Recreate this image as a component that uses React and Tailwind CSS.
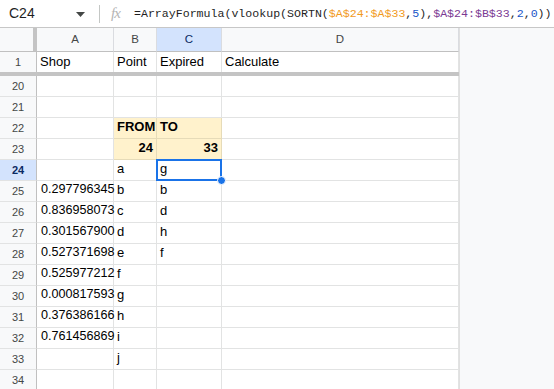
import React from "react";

const cols = [
  { key: "A", w: "w-[77px]" },
  { key: "B", w: "w-[43px]" },
  { key: "C", w: "w-[65px]" },
  { key: "D", w: "w-[237px]" },
];

const data = {
  1: { A: "Shop", B: "Point", C: "Expired", D: "Calculate" },
  22: { B: "FROM", C: "TO" },
  23: { B: "24", C: "33" },
  24: { B: "a", C: "g" },
  25: { A: "0.297796345", B: "b", C: "b" },
  26: { A: "0.836958073", B: "c", C: "d" },
  27: { A: "0.301567900", B: "d", C: "h" },
  28: { A: "0.527371698", B: "e", C: "f" },
  29: { A: "0.525977212", B: "f" },
  30: { A: "0.000817593", B: "g" },
  31: { A: "0.376386166", B: "h" },
  32: { A: "0.761456869", B: "i" },
  33: { B: "j" },
};

const rows = [20, 21, 22, 23, 24, 25, 26, 27, 28, 29, 30, 31, 32, 33, 34];

function FormulaBar() {
  return (
    <div className="h-[28px] flex items-center border-b border-[#c7c7c7] bg-white">
      <div className="w-[99px] flex items-center pl-[9px] pr-[14px]">
        <span className="text-[14px] text-[#1f1f1f] flex-1">C24</span>
        <svg width="9" height="5" viewBox="0 0 9 5" className="mt-[1px]">
          <path d="M0 0h9L4.5 5z" fill="#444746" />
        </svg>
      </div>
      <div className="w-px h-[18px] bg-[#c4c7c5]" />
      <div className="w-[34px] flex items-center pl-[11px]">
        <span className="text-[15px] italic text-[#b4b4b4] font-['Liberation_Serif',serif] tracking-[-1px]">
          fx
        </span>
      </div>
      <div className="font-['Liberation_Mono',monospace] text-[11.6px] text-[#1f1f1f] whitespace-nowrap">
        =ArrayFormula(vlookup(SORTN(
        <span className="text-[#f29b1d]">$A$24:$A$33</span>,
        <span className="text-[#1a56c8]">5</span>),
        <span className="text-[#7b3a93]">$A$24:$B$33</span>,
        <span className="text-[#1a56c8]">2</span>,
        <span className="text-[#1a56c8]">0</span>))
      </div>
    </div>
  );
}

function Cell({ row, col }) {
  const v = data[row]?.[col.key] ?? "";
  const yellow = (row === 22 || row === 23) && (col.key === "B" || col.key === "C");
  const bold = yellow;
  const right = row === 23;
  const selected = row === 24 && col.key === "C";
  const num = col.key === "A";
  return (
    <div
      className={`${col.w} h-full shrink-0 relative border-r border-b flex items-end pb-[2px] text-black whitespace-nowrap ${
        num ? "pl-[4px] text-[12.6px]" : "px-[3px] text-[13px]"
      } ${yellow ? "bg-[#fff2cc] border-[#e6dbb8]" : "border-[#e2e3e3]"} ${
        bold ? "font-bold" : ""
      } ${right ? "justify-end" : ""} ${selected ? "z-10" : ""}`}
    >
      {v}
      {selected && (
        <>
          <div className="absolute -left-px -top-px w-[66px] h-[22px] border-2 border-[#1a73e8]" />
          <div className="absolute -right-[5px] -bottom-[5px] w-[9px] h-[9px] rounded-full bg-[#1a73e8] border border-white" />
        </>
      )}
    </div>
  );
}

function RowHead({ n, active }) {
  return (
    <div
      className={`w-[37px] h-full shrink-0 border-r border-b border-r-[#c0c0c0] border-b-[#e2e3e3] flex items-center justify-center text-[11px] ${
        active ? "bg-[#d3e3fd] text-[#0b2a63] font-bold" : "bg-[#f8f9fa] text-[#444746]"
      }`}
    >
      {n}
    </div>
  );
}

export default function App() {
  return (
    <div className="w-[554px] h-[389px] overflow-hidden bg-white font-['Liberation_Sans',Arial,sans-serif]">
      <FormulaBar />
      <div className="flex">
        <div className="w-[459px] shrink-0">
          {/* column headers */}
          <div className="flex h-[24px]">
            <div className="w-[37px] shrink-0 bg-[#f8f9fa] border-b border-[#c0c0c0] flex justify-end">
              <div className="w-[4px] h-full bg-[#c4c4c4]" />
            </div>
            {cols.map((c) => (
              <div
                key={c.key}
                className={`${c.w} shrink-0 border-r border-b border-[#c0c0c0] border-r-[#dadce0] flex items-center justify-center text-[11.5px] ${
                  c.key === "C" ? "bg-[#d3e3fd] text-[#0b2a63]" : "bg-[#f8f9fa] text-[#444746]"
                } ${c.key === "D" ? "border-r-[#c0c0c0]" : ""}`}
              >
                {c.key}
              </div>
            ))}
          </div>
          {/* frozen row 1 */}
          <div className="flex h-[20px]">
            <div className="w-[37px] h-full shrink-0 border-r border-[#c0c0c0] bg-[#f8f9fa] flex items-center justify-center text-[11px] text-[#444746]">
              1
            </div>
            {cols.map((c) => (
              <div
                key={c.key}
                className={`${c.w} h-full shrink-0 border-r border-[#e2e3e3] flex items-end pb-[1px] px-[3px] text-[13px] text-black whitespace-nowrap`}
              >
                {data[1][c.key]}
              </div>
            ))}
          </div>
          <div className="h-[4px] bg-[#c4c4c4]" />
          {rows.map((r) => (
            <div key={r} className={`flex h-[21px] relative ${r === 24 ? "z-10" : ""}`}>
              <RowHead n={r} active={r === 24} />
              {cols.map((c) => (
                <Cell key={c.key} row={r} col={c} />
              ))}
            </div>
          ))}
        </div>
        <div className="flex-1 h-[361px] bg-[#f8f9fa] border-l border-[#e0e0e0]" />
      </div>
    </div>
  );
}
